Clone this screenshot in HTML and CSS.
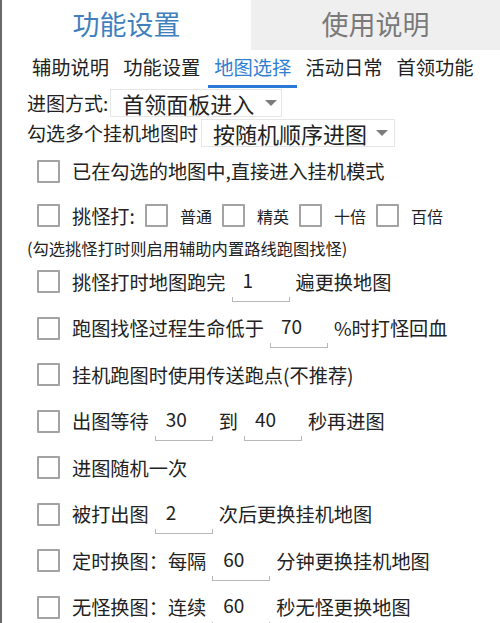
FILE: index.html
```html
<!DOCTYPE html>
<html lang="zh-CN">
<head>
    <meta charset="UTF-8">
    <meta name="viewport" content="width=device-width, initial-scale=1.0">
    <title>功能设置</title>
    <link rel="stylesheet" href="styles.css">
</head>
<body>
    <div class="page">
        <div class="top-tabs">
            <div class="top-tab active">功能设置</div>
            <div class="top-tab">使用说明</div>
        </div>

        <div class="sub-tabs">
            <span class="sub-tab">辅助说明</span>
            <span class="sub-tab">功能设置</span>
            <span class="sub-tab active">地图选择</span>
            <span class="sub-tab">活动日常</span>
            <span class="sub-tab">首领功能</span>
        </div>

        <div class="form">
            <!-- 下拉选择 -->
            <div class="select-row">
                <span class="label">进图方式:</span>
                <div class="select sel-a"><span>首领面板进入</span><i class="arrow"></i></div>
            </div>
            <div class="select-row">
                <span class="label">勾选多个挂机地图时</span>
                <div class="select sel-b"><span>按随机顺序进图</span><i class="arrow"></i></div>
            </div>

            <!-- 选项 -->
            <div class="check-row">
                <span class="box"></span>
                <span class="text">已在勾选的地图中,直接进入挂机模式</span>
            </div>
            <div class="check-row short">
                <span class="box"></span>
                <span class="text">挑怪打:</span>
                <span class="box small"></span><span class="mini">普通</span>
                <span class="box small"></span><span class="mini">精英</span>
                <span class="box small"></span><span class="mini">十倍</span>
                <span class="box small"></span><span class="mini">百倍</span>
            </div>
            <div class="note">(勾选挑怪打时则启用辅助内置路线跑图找怪)</div>

            <div class="check-row">
                <span class="box"></span>
                <span class="text">挑怪打时地图跑完</span>
                <span class="field">1</span>
                <span class="text">遍更换地图</span>
            </div>
            <div class="check-row">
                <span class="box"></span>
                <span class="text">跑图找怪过程生命低于</span>
                <span class="field">70</span>
                <span class="text">%时打怪回血</span>
            </div>
            <div class="check-row">
                <span class="box"></span>
                <span class="text">挂机跑图时使用传送跑点(不推荐)</span>
            </div>
            <div class="check-row">
                <span class="box"></span>
                <span class="text">出图等待</span>
                <span class="field">30</span>
                <span class="text">到</span>
                <span class="field">40</span>
                <span class="text">秒再进图</span>
            </div>
            <div class="check-row">
                <span class="box"></span>
                <span class="text">进图随机一次</span>
            </div>
            <div class="check-row">
                <span class="box"></span>
                <span class="text">被打出图</span>
                <span class="field">2</span>
                <span class="text">次后更换挂机地图</span>
            </div>
            <div class="check-row">
                <span class="box"></span>
                <span class="text">定时换图：每隔</span>
                <span class="field">60</span>
                <span class="text">分钟更换挂机地图</span>
            </div>
            <div class="check-row">
                <span class="box"></span>
                <span class="text">无怪换图：连续</span>
                <span class="field">60</span>
                <span class="text">秒无怪更换地图</span>
            </div>
        </div>
    </div>
</body>
</html>
```

FILE: styles.css
```css
* {
    margin: 0;
    padding: 0;
    box-sizing: border-box;
}

body {
    font-family: "Noto Sans CJK SC", "Noto Sans", sans-serif;
    background: #ffffff;
    color: #222;
    overflow: hidden;
}

.page {
    width: 500px;
    height: 623px;
    border-left: 2px solid #6a6a6a;
    overflow: hidden;
}

/* 顶部标签 */
.top-tabs {
    display: flex;
    height: 50px;
}

.top-tab {
    width: 250px;
    display: flex;
    align-items: center;
    justify-content: center;
    font-size: 27px;
    color: #7a7a7a;
    background: #efefef;
    padding-bottom: 4px;
}

.top-tab.active {
    color: #3f7fbd;
    background: #ffffff;
}

/* 二级标签 */
.sub-tabs {
    display: flex;
    gap: 2px;
    padding-left: 24px;
    height: 38px;
}

.sub-tab {
    padding: 0 6px;
    font-size: 19.3px;
    line-height: 35px;
    height: 38px;
    border-bottom: 3px solid transparent;
    color: #222;
}

.sub-tab.active {
    color: #2f7fd2;
    border-bottom-color: #2b78d6;
}

/* 表单 */
.form {
    padding-left: 25px;
}

.select-row {
    display: flex;
    align-items: center;
    height: 30px;
}

.label {
    font-size: 19px;
    line-height: 24px;
}

.select {
    display: flex;
    align-items: center;
    height: 28px;
    border: 1px solid #e6e6e6;
    font-size: 22px;
    padding-left: 11px;
    margin-left: 2px;
}

.sel-a {
    width: 172px;
}

.sel-b {
    width: 194px;
    margin-left: 3px;
}

.select span {
    line-height: 26px;
}

.arrow {
    margin-left: auto;
    margin-right: 6px;
    width: 0;
    height: 0;
    border-left: 6px solid transparent;
    border-right: 6px solid transparent;
    border-top: 6px solid #7c7c7c;
}

.sel-a .arrow {
    margin-right: 4px;
}

.check-row {
    display: flex;
    align-items: center;
    height: 46.5px;
    padding-left: 10px;
}

.check-row.short {
    height: 42px;
}

.box {
    width: 23px;
    height: 23px;
    border: 2px solid #a3a3a3;
    border-radius: 1px;
    flex-shrink: 0;
    margin-right: 12px;
}

.box.small {
    margin-left: 10px;
}

.text {
    font-size: 19.2px;
    line-height: 26px;
    white-space: nowrap;
}

.mini {
    font-size: 16px;
    line-height: 24px;
}

.note {
    font-size: 16.3px;
    line-height: 22px;
    height: 22px;
    color: #222;
}

/* 输入框：下划线样式 */
.field {
    position: relative;
    width: 58px;
    height: 40px;
    margin: 0 6px;
    padding-left: 11px;
    padding-top: 5px;
    font-size: 19px;
    line-height: 26px;
    border-bottom: 1px solid #b8b8b8;
    align-self: flex-start;
    margin-top: 3px;
}

.field::before,
.field::after {
    content: "";
    position: absolute;
    bottom: 0;
    width: 1px;
    height: 4px;
    background: #b8b8b8;
}

.field::before {
    left: 0;
}

.field::after {
    right: 0;
}
```
